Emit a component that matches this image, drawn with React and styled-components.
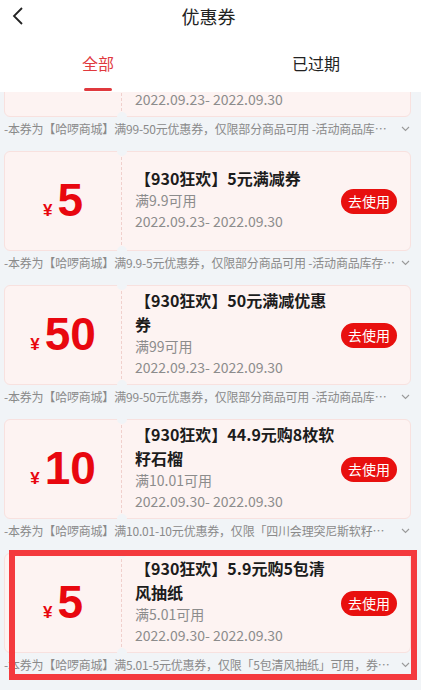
import { useLayoutEffect, useRef } from 'react';
import styled, { createGlobalStyle } from 'styled-components';

const GlobalStyle = createGlobalStyle`
  * {
    box-sizing: border-box;
  }
  body {
    margin: 0;
    background-color: #f1f4f7;
    font-family: "Noto Sans CJK SC", "Noto Sans", sans-serif;
  }
`;

const Page = styled.div`
  display: flex;
  flex-direction: column;
  height: 100vh;
  background-color: #f1f4f7;
`;

const Header = styled.header`
  flex: none;
  background-color: white;
  padding-bottom: 1px;
`;

const TopBar = styled.div`
  display: grid;
  grid-template-columns: 48px 1fr 48px;
  align-items: center;
  height: 32px;
`;

const BackButton = styled.button`
  display: flex;
  align-items: center;
  padding: 0 0 0 12px;
  height: 32px;
  border: none;
  background: none;
  color: #222;
`;

const Title = styled.h1`
  margin: 0;
  padding-right: 4px;
  text-align: center;
  font-size: 18px;
  font-weight: 400;
  color: #222;
`;

const Tabs = styled.nav`
  display: flex;
  justify-content: space-between;
  padding: 0 81px 0 82px;
`;

const Tab = styled.div`
  display: flex;
  flex-direction: column;
  align-items: center;
  padding-top: 20px;
  font-size: 16px;
  line-height: 22px;
  color: ${(p) => (p.$active ? '#e0393e' : '#222')};

  &::after {
    content: '';
    width: 28px;
    height: 3px;
    margin-top: 14px;
    border-radius: 2px;
    background-color: ${(p) => (p.$active ? '#e0393e' : 'transparent')};
  }
`;

const List = styled.main`
  flex: 1;
  overflow-y: auto;
  padding: 0 10px 24px 4px;
  scrollbar-width: none;

  &::-webkit-scrollbar {
    display: none;
  }
`;

const Item = styled.section`
  position: relative;
  margin-bottom: 13px;
`;

const Card = styled.div`
  display: flex;
  height: 100px;
  background-color: #fdf3f2;
  border: 1px solid #f8e1df;
  border-radius: 6px;
`;

const Stub = styled.div`
  position: relative;
  flex: none;
  width: 117px;
  display: flex;
  align-items: center;
  justify-content: center;
  padding-bottom: 3px;
  border-right: 1px dashed #f0d0cd;

  &::before,
  &::after {
    content: '';
    position: absolute;
    right: -6px;
    width: 10px;
    height: 10px;
    border-radius: 50%;
    background-color: #f1f4f7;
  }
  &::before {
    top: -6px;
  }
  &::after {
    bottom: -6px;
  }
`;

const Amount = styled.div`
  display: flex;
  align-items: baseline;
  color: #e8070f;
  font-family: "Liberation Sans", Arial, sans-serif;
  font-weight: 700;
`;

const Yen = styled.span`
  font-size: 17px;
  margin-right: 5px;
`;

const Value = styled.span`
  font-size: 46px;
  line-height: 1;
`;

const Body = styled.div`
  flex: 1;
  display: flex;
  align-items: center;
  gap: 4px;
  padding: 0 13px 4px;
  min-width: 0;
`;

const Info = styled.div`
  flex: 1;
  min-width: 0;
`;

const CouponName = styled.h2`
  margin: 0;
  font-size: 16px;
  line-height: 24px;
  font-weight: 700;
  color: #1c1c1c;
`;

const Meta = styled.p`
  margin: 0;
  font-size: 14px;
  line-height: 21px;
  color: #8c8c8c;
`;

const UseButton = styled.button`
  flex: none;
  width: 56px;
  height: 25px;
  margin-top: 4px;
  padding: 0;
  border: none;
  border-radius: 13px;
  background-color: #e8100f;
  color: white;
  font-family: inherit;
  font-size: 14px;
`;

const DescRow = styled.div`
  display: flex;
  align-items: center;
  padding-top: 3px;
  color: #8a8a8a;
`;

const DescText = styled.p`
  flex: 1;
  min-width: 0;
  margin: 0;
  font-size: 12px;
  line-height: 18px;
  letter-spacing: -0.2px;
  white-space: nowrap;
  overflow: hidden;
  text-overflow: ellipsis;
`;

const Chevron = styled.svg`
  flex: none;
  margin: 0 1px 0 5px;
  color: #9a9a9a;
`;

const Highlight = styled.div`
  position: absolute;
  top: -3px;
  left: 5px;
  width: 408px;
  height: 130px;
  border: 6px solid #f43a3e;
  pointer-events: none;
`;

const coupons = [
  {
    amount: 50,
    name: '【930狂欢】50元满减优惠券',
    condition: '满99可用',
    date: '2022.09.23- 2022.09.30',
    desc: '-本券为【哈啰商城】满99-50元优惠券，仅限部分商品可用 -活动商品库存有限，先到先得',
  },
  {
    amount: 5,
    name: '【930狂欢】5元满减券',
    condition: '满9.9可用',
    date: '2022.09.23- 2022.09.30',
    desc: '-本券为【哈啰商城】满9.9-5元优惠券，仅限部分商品可用 -活动商品库存有限，先到先得',
  },
  {
    amount: 50,
    name: '【930狂欢】50元满减优惠券',
    condition: '满99可用',
    date: '2022.09.23- 2022.09.30',
    desc: '-本券为【哈啰商城】满99-50元优惠券，仅限部分商品可用 -活动商品库存有限，先到先得',
  },
  {
    amount: 10,
    name: '【930狂欢】44.9元购8枚软籽石榴',
    condition: '满10.01可用',
    date: '2022.09.30- 2022.09.30',
    desc: '-本券为【哈啰商城】满10.01-10元优惠券，仅限「四川会理突尼斯软籽石榴」可用',
  },
  {
    amount: 5,
    name: '【930狂欢】5.9元购5包清风抽纸',
    condition: '满5.01可用',
    date: '2022.09.30- 2022.09.30',
    desc: '-本券为【哈啰商城】满5.01-5元优惠券，仅限「5包清风抽纸」可用，券后价5.9元',
    marked: true,
  },
];

function Coupon({ coupon }) {
  return (
    <Item>
      <Card>
        <Stub>
          <Amount>
            <Yen>¥</Yen>
            <Value>{coupon.amount}</Value>
          </Amount>
        </Stub>
        <Body>
          <Info>
            <CouponName>{coupon.name}</CouponName>
            <Meta>{coupon.condition}</Meta>
            <Meta>{coupon.date}</Meta>
          </Info>
          <UseButton>去使用</UseButton>
        </Body>
      </Card>
      <DescRow>
        <DescText>{coupon.desc}</DescText>
        <Chevron width="9" height="6" viewBox="0 0 9 6" fill="none">
          <path d="M1 1l3.5 3.5L8 1" stroke="currentColor" strokeWidth="1.1" />
        </Chevron>
      </DescRow>
      {coupon.marked && <Highlight />}
    </Item>
  );
}

export default function App() {
  const listRef = useRef(null);

  useLayoutEffect(() => {
    if (listRef.current) listRef.current.scrollTop = 75;
  }, []);

  return (
    <Page>
      <GlobalStyle />
      <Header>
        <TopBar>
          <BackButton aria-label="返回">
            <svg width="12" height="18" viewBox="0 0 12 18" fill="none">
              <path d="M10 1L2 9l8 8" stroke="currentColor" strokeWidth="1.8" />
            </svg>
          </BackButton>
          <Title>优惠券</Title>
          <span />
        </TopBar>
        <Tabs>
          <Tab $active>全部</Tab>
          <Tab>已过期</Tab>
        </Tabs>
      </Header>
      <List ref={listRef}>
        {coupons.map((c, i) => (
          <Coupon key={i} coupon={c} />
        ))}
      </List>
    </Page>
  );
}
